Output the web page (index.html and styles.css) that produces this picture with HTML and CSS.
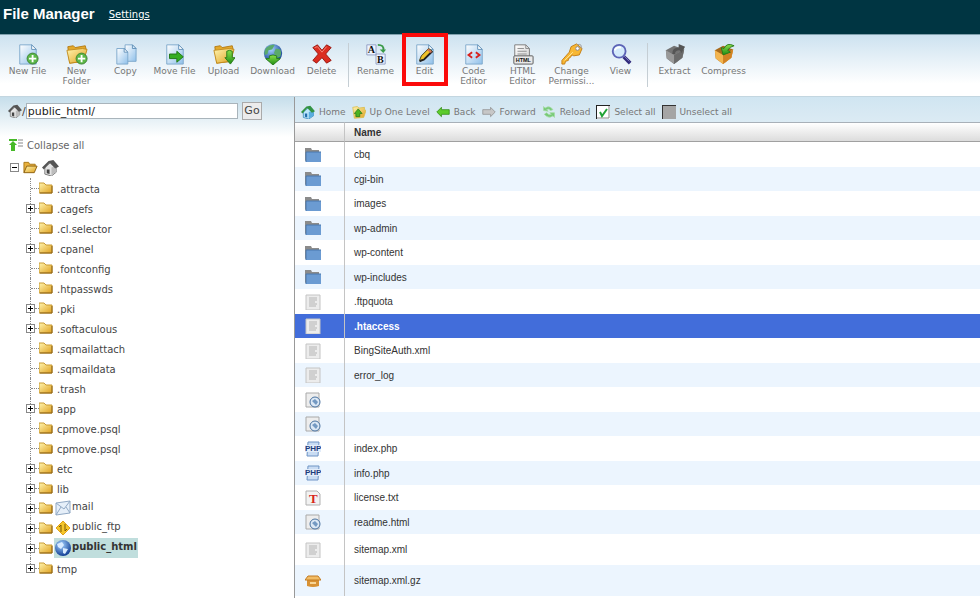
FILE: index.html
```html
<!DOCTYPE html>
<html lang="en">
<head>
    <meta charset="UTF-8">
    <title>File Manager</title>
    <link rel="stylesheet" href="styles.css">
</head>
<body>
    <!-- icon set -->
    <svg class="sprite" aria-hidden="true">
        <defs>
            <linearGradient id="gBlue" x1="0" y1="0" x2="1" y2="1"><stop offset="0" stop-color="#ffffff"/><stop offset="1" stop-color="#8fc0ea"/></linearGradient>
            <linearGradient id="gGold" x1="0" y1="0" x2="1" y2="1"><stop offset="0" stop-color="#fff5b0"/><stop offset="1" stop-color="#dfa01e"/></linearGradient>
            <linearGradient id="gGreen" x1="0" y1="0" x2="0" y2="1"><stop offset="0" stop-color="#8be04a"/><stop offset="1" stop-color="#1f8c14"/></linearGradient>
            <radialGradient id="gGlobe" cx=".4" cy=".3" r=".7"><stop offset="0" stop-color="#a6d4ff"/><stop offset="1" stop-color="#123f96"/></radialGradient>
            <linearGradient id="gGrey" x1="0" y1="0" x2="1" y2="1"><stop offset="0" stop-color="#ffffff"/><stop offset="1" stop-color="#cfcfcf"/></linearGradient>
        </defs>
        <symbol id="page" viewBox="0 0 24 24"><path d="M3 2h13l5 5v16H3z" fill="url(#gBlue)" stroke="#7ba6cb"/><path d="M16 2v5h5z" fill="#fff" stroke="#5f8fb8"/></symbol>
        <symbol id="bigfolder" viewBox="0 0 24 24"><path d="M2 4l6-1 2 2 11-2 1 4-2 13-16 2z" fill="#e3a92b" stroke="#b37a12"/><path d="M1 8l17-2 5 1-4 13-15 2z" fill="url(#gGold)" stroke="#c28a1b"/></symbol>
        <symbol id="plus" viewBox="0 0 24 24"><circle cx="17" cy="17" r="6" fill="#5cb848" stroke="#3b7f31"/><path d="M17 13v8M13 17h8" stroke="#fff" stroke-width="2"/></symbol>
        <symbol id="newfile" viewBox="0 0 24 24"><use href="#page"/><use href="#plus"/></symbol>
        <symbol id="newfolder" viewBox="0 0 24 24"><use href="#bigfolder"/><use href="#plus"/></symbol>
        <symbol id="copy" viewBox="0 0 24 24"><path d="M11 2h8l4 4v14H11z" fill="url(#gBlue)" stroke="#7ba6cb"/><path d="M19 2v4h4z" fill="#dcecf9" stroke="#5f8fb8"/><path d="M2 6h8l4 4v13H2z" fill="url(#gBlue)" stroke="#7ba6cb"/><path d="M10 6v4h4z" fill="#fff" stroke="#5f8fb8"/></symbol>
        <symbol id="move" viewBox="0 0 24 24"><use href="#page"/><path d="M6 12h8V9l7 6-7 6v-4H6z" fill="#35ad22" stroke="#1d7412"/></symbol>
        <symbol id="upload" viewBox="0 0 24 24"><use href="#bigfolder"/><path d="M15 9q3-2 6 0v7h3l-5 7-6-7h2z" fill="url(#gGreen)" stroke="#267a18"/></symbol>
        <symbol id="download" viewBox="0 0 24 24"><circle cx="12" cy="11" r="10" fill="url(#gGlobe)"/><path d="M5 5q4-4 9-3l-3 5-4 1-1 4-3 1q-1-5 2-8zM15 6l5 1q2 4 0 8l-3 1-4-5z" fill="#5aaa6b"/><path d="M8 14q4-2 8 0v3h4l-8 7-8-7h4z" fill="url(#gGreen)" stroke="#267a18"/></symbol>
        <symbol id="delete" viewBox="0 0 24 24"><path d="M2 5l5-3 5 6 5-6 5 3-6 7 6 7-5 3-5-6-6 6-4-3 6-7z" fill="#dc2d20" stroke="#96160e"/><path d="M4 5l3-1 5 6 5-6" fill="none" stroke="#f58a7c"/></symbol>
        <symbol id="rename" viewBox="0 0 24 24"><path d="M2 2h10v11H2zM12 12h10v11H12z" fill="#eef4ff" stroke="#8e9cc4"/><path d="M14 2q7 0 6 6" fill="none" stroke="#3a9a48" stroke-width="2"/><path d="M16 7h7l-3 4z" fill="#3a9a48"/></symbol>
        <symbol id="edit" viewBox="0 0 24 24"><use href="#page"/><path d="M6 19l2-5 8-8 4 3-9 9z" fill="#efc32c" stroke="#3e3615"/><path d="M6 20l5-2 9-9" fill="none" stroke="#222" stroke-width="2"/><path d="M15 7l4 3" stroke="#d8735a" stroke-width="2"/></symbol>
        <symbol id="code" viewBox="0 0 24 24"><use href="#page"/><path d="M10 10l-4 3 4 3M14 10l4 3-4 3" fill="none" stroke="#d9201c" stroke-width="2"/></symbol>
        <symbol id="html" viewBox="0 0 24 24"><path d="M3 2h12l4 4v15H3z" fill="url(#gGrey)" stroke="#777"/><path d="M15 2v4h4M6 6h7M6 9h10M6 12h10" fill="none" stroke="#8a8a8a"/><rect x="2" y="14" width="21" height="9" rx="1" fill="#e9e9e9" stroke="#555"/></symbol>
        <symbol id="key" viewBox="0 0 24 24"><path d="M11 4l6-3 6 5-3 7-6 1-2-1-2 3-2 1v2l-3 1-1 3H1v-4l8-9z" fill="#f7b733" stroke="#c27b12"/><path d="M4 19l9-9" stroke="#ffe9a0"/><circle cx="18" cy="6" r="2" fill="#fff" stroke="#889"/><path d="M18 2q5-2 4 4" fill="none" stroke="#999"/></symbol>
        <symbol id="view" viewBox="0 0 24 24"><path d="M15 15l7 7" stroke="#312b7c" stroke-width="4"/><path d="M15 14l6 6" stroke="#8580c6"/><circle cx="10" cy="9" r="7" fill="#d3eafb" stroke="#5c63b6" stroke-width="2"/><path d="M5 8q2-4 7-3" fill="none" stroke="#fff" stroke-width="2"/></symbol>
        <symbol id="extract" viewBox="0 0 24 24"><path d="M2 8l9-5 11 4-2 9-9 7-8-6z" fill="#747474"/><path d="M2 8l9 5 11-6-2 9-9 7-8-6z" fill="#999"/><path d="M11 13v10l9-7 2-9z" fill="#6a6a6a"/><path d="M9 12q0-7 7-7V1l7 3-4 7-2-3q-5 0-5 4z" fill="#555"/></symbol>
        <symbol id="compress" viewBox="0 0 24 24"><path d="M2 8l9-5 11 4-2 9-9 7-8-6z" fill="#a86a1b"/><path d="M2 8l9 5 11-6-2 9-9 7-8-6z" fill="#f3b54f"/><path d="M11 13v10l9-7 2-9z" fill="#d18224"/><path d="M23 3q-8-4-11 3L9 5l2 8 8-3-3-2q2-4 7-5z" fill="url(#gGreen)" stroke="#267a18"/></symbol>

        <symbol id="homegrey" viewBox="0 0 18 18"><path d="M3 9v7l7 2 5-4V8l-5-5z" fill="#e4e4e4" stroke="#777"/><path d="M10 9v8l5-3V7z" fill="#bcbcbc"/><path d="M7 2l5-1 6 7-4 2-6-6-6 7-2-2z" fill="#555"/><path d="M5 11h3v5l-3-1z" fill="#444"/></symbol>
        <symbol id="home" viewBox="0 0 18 18"><path d="M3 9v7l7 2 6-4V8l-6-5z" fill="#bde6fb" stroke="#3586bb"/><path d="M10 9v8l6-3V7z" fill="#5aaedf"/><path d="M7 2l5-1 6 7-4 2-6-6-6 7-2-2z" fill="#339343"/><path d="M5 11h3v5l-3-1z" fill="#226daa"/></symbol>
        <symbol id="up" viewBox="0 0 18 18"><path d="M1 3l6-1 2 2 7-1v3l2 1-3 9-12 1z" fill="url(#gGold)" stroke="#d8bb4a"/><path d="M5 15v-4H3l5-6 5 6h-3v4z" fill="#4ab421" stroke="#267a18"/></symbol>
        <symbol id="back" viewBox="0 0 18 18"><path d="M1 9l6-6v3h10v6H7v3z" fill="#5dcc2c" stroke="#328d15"/></symbol>
        <symbol id="forward" viewBox="0 0 18 18"><path d="M17 9l-6-6v3H1v6h10v3z" fill="#c7c7c7" stroke="#929292"/></symbol>
        <symbol id="reload" viewBox="0 0 18 18"><path d="M2 7V2l2 2q6-4 10 2l-3 1q-3-3-5-1l2 2zM16 10v6l-2-2q-6 4-11-2l3-2q3 4 6 2l-2-2z" fill="#78ca78" stroke="#a2dba2"/></symbol>
        <symbol id="checkon" viewBox="0 0 14 14"><rect width="14" height="14" fill="#fff"/><path d="M0 14V0h14v1H1v13z" fill="#222"/><path d="M1 13h12V1" fill="none" stroke="#888"/><path d="M4 7l2 4 5-7" fill="none" stroke="#21a336" stroke-width="2"/></symbol>
        <symbol id="checkoff" viewBox="0 0 14 14"><rect width="14" height="14" fill="#a5a5a5"/><path d="M0 14V0h14v1H1v13z" fill="#333"/></symbol>
        <symbol id="collapse" viewBox="0 0 14 12"><path d="M0 0h8v2H0zM4 2l4 4H6v6H2V6H0z" fill="#46b928"/><path d="M9 1h5M9 4h5M9 7h5" stroke="#888"/></symbol>

        <symbol id="closed" viewBox="0 0 14 12"><path d="M0 1h5l2 2h6v8H0z" fill="url(#gGold)" stroke="#c99b35"/><path d="M1 11h12V4" fill="none" stroke="#8a6114"/></symbol>
        <symbol id="open" viewBox="0 0 16 13"><path d="M1 12V1h5l1 2h6v3" fill="#e9b13c" stroke="#a77716"/><path d="M1 12l3-7h11l-3 7z" fill="url(#gGold)" stroke="#8c5f10"/></symbol>
        <symbol id="expand" viewBox="0 0 7 7"><path d="M1 3h5v1H1zM3 1h1v5H3z"/></symbol>
        <symbol id="shrink" viewBox="0 0 7 7"><path d="M1 3h5v1H1z"/></symbol>
        <symbol id="mail" viewBox="0 0 16 16"><path d="M1 3l14-2v12L1 15z" fill="#e6eff9" stroke="#91a9c5"/><path d="M1 3l8 6 6-8M1 15l5-8M15 13l-4-6" fill="none" stroke="#91a9c5"/></symbol>
        <symbol id="ftp" viewBox="0 0 16 16"><path d="M8 1l7 7-7 7-7-7z" fill="#f5c62c" stroke="#e0a21b"/><path d="M6 12V5M4 7l2-2M10 4v7M12 9l-2 2" fill="none" stroke="#7d5b06"/></symbol>
        <symbol id="globe" viewBox="0 0 16 16"><circle cx="8" cy="8" r="8" fill="url(#gGlobe)"/><path d="M2 4l5-2 2 3-3 4-3-2zM8 8l5 1-3 5-2-1z" fill="#d9ebff"/></symbol>

        <symbol id="folder" viewBox="0 0 16 16"><path d="M0 14V1h6l1 2h7v4" fill="#8b8b8b"/><path d="M2 5h14v10H1V6z" fill="#6b9bd2"/><path d="M1 15V5h15" fill="none" stroke="#4a78ad"/></symbol>
        <symbol id="doc" viewBox="0 0 16 16"><path d="M1 1h14v15H1z" fill="#ececec" stroke="#c4c4c4"/><path d="M4 4h8M4 6h8M4 8h6M4 10h8M4 12h7" stroke="#b4b4b4"/></symbol>
        <symbol id="web" viewBox="0 0 16 16"><path d="M1 1h13v14H1z" fill="#ededed" stroke="#a9a9a9"/><circle cx="10" cy="10" r="5" fill="#dce8f5" stroke="#48719f"/><path d="M7 9l3-2 3 3-2 3-2-2z" fill="#7499c2"/></symbol>
        <symbol id="php" viewBox="0 0 16 16"><path d="M3 1h11l-1 14H2z" fill="#c9dcf3" stroke="#6e94c5"/><path d="M0 4h16v7H0z" fill="#e3edfa"/></symbol>
        <symbol id="txt" viewBox="0 0 16 16"><path d="M1 1h11l3 3v11H1z" fill="#f2f2f2" stroke="#b1b1b1"/></symbol>
        <symbol id="gz" viewBox="0 0 16 16"><path d="M2 7h12v6q-6 2-12 0z" fill="#d89235"/><path d="M3 3h10l3 4H0z" fill="#f2bd66" stroke="#c27a22"/><path d="M5 9h6v2H5z" fill="#f8d596"/></symbol>
    </svg>

    <header class="title-bar">
        <h1>File Manager</h1>
        <a href="#settings">Settings</a>
    </header>

    <nav class="toolbar">
        <button type="button"><svg><use href="#newfile"/></svg>New File</button>
        <button type="button"><svg><use href="#newfolder"/></svg>New<br>Folder</button>
        <button type="button"><svg><use href="#copy"/></svg>Copy</button>
        <button type="button"><svg><use href="#move"/></svg>Move File</button>
        <button type="button"><svg><use href="#upload"/></svg>Upload</button>
        <button type="button"><svg><use href="#download"/></svg>Download</button>
        <button type="button"><svg><use href="#delete"/></svg>Delete</button>
        <span class="separator"></span>
        <button type="button"><svg viewBox="0 0 24 24"><use href="#rename"/><text x="3" y="11" class="glyph serif">A</text><text x="13" y="22" class="glyph serif">B</text></svg>Rename</button>
        <button type="button" class="highlight"><svg><use href="#edit"/></svg>Edit</button>
        <button type="button"><svg><use href="#code"/></svg>Code<br>Editor</button>
        <button type="button"><svg viewBox="0 0 24 24"><use href="#html"/><text x="4" y="21" class="glyph tiny">HTML</text></svg>HTML<br>Editor</button>
        <button type="button"><svg><use href="#key"/></svg>Change<br>Permissi...</button>
        <button type="button"><svg><use href="#view"/></svg>View</button>
        <span class="separator"></span>
        <button type="button"><svg><use href="#extract"/></svg>Extract</button>
        <button type="button"><svg><use href="#compress"/></svg>Compress</button>
    </nav>

    <main class="panes">
        <aside class="tree-pane">
            <form class="location">
                <label for="path"><svg><use href="#homegrey"/></svg>/</label>
                <input id="path" type="text" value="public_html/">
                <button type="button">Go</button>
            </form>
            <a href="#collapse" class="collapse-all"><svg><use href="#collapse"/></svg>Collapse all</a>
            <div class="root">
                <button type="button" class="toggle" aria-label="Collapse home"><svg><use href="#shrink"/></svg></button>
                <svg class="open"><use href="#open"/></svg>
                <svg class="house"><use href="#homegrey"/></svg>
            </div>
            <ul class="tree">
                <li><i class="branch"></i><svg><use href="#closed"/></svg><a href="#t">.attracta</a></li>
                <li><button type="button" class="toggle" aria-label="Expand"><svg><use href="#expand"/></svg></button><i class="branch"></i><svg><use href="#closed"/></svg><a href="#t">.cagefs</a></li>
                <li><i class="branch"></i><svg><use href="#closed"/></svg><a href="#t">.cl.selector</a></li>
                <li><button type="button" class="toggle" aria-label="Expand"><svg><use href="#expand"/></svg></button><i class="branch"></i><svg><use href="#closed"/></svg><a href="#t">.cpanel</a></li>
                <li><i class="branch"></i><svg><use href="#closed"/></svg><a href="#t">.fontconfig</a></li>
                <li><i class="branch"></i><svg><use href="#closed"/></svg><a href="#t">.htpasswds</a></li>
                <li><button type="button" class="toggle" aria-label="Expand"><svg><use href="#expand"/></svg></button><i class="branch"></i><svg><use href="#closed"/></svg><a href="#t">.pki</a></li>
                <li><button type="button" class="toggle" aria-label="Expand"><svg><use href="#expand"/></svg></button><i class="branch"></i><svg><use href="#closed"/></svg><a href="#t">.softaculous</a></li>
                <li><i class="branch"></i><svg><use href="#closed"/></svg><a href="#t">.sqmailattach</a></li>
                <li><i class="branch"></i><svg><use href="#closed"/></svg><a href="#t">.sqmaildata</a></li>
                <li><i class="branch"></i><svg><use href="#closed"/></svg><a href="#t">.trash</a></li>
                <li><button type="button" class="toggle" aria-label="Expand"><svg><use href="#expand"/></svg></button><i class="branch"></i><svg><use href="#closed"/></svg><a href="#t">app</a></li>
                <li><i class="branch"></i><svg><use href="#closed"/></svg><a href="#t">cpmove.psql</a></li>
                <li><i class="branch"></i><svg><use href="#closed"/></svg><a href="#t">cpmove.psql</a></li>
                <li><button type="button" class="toggle" aria-label="Expand"><svg><use href="#expand"/></svg></button><i class="branch"></i><svg><use href="#closed"/></svg><a href="#t">etc</a></li>
                <li><button type="button" class="toggle" aria-label="Expand"><svg><use href="#expand"/></svg></button><i class="branch"></i><svg><use href="#closed"/></svg><a href="#t">lib</a></li>
                <li><button type="button" class="toggle" aria-label="Expand"><svg><use href="#expand"/></svg></button><i class="branch"></i><svg><use href="#closed"/></svg><a href="#t" class="special"><svg><use href="#mail"/></svg>mail</a></li>
                <li><button type="button" class="toggle" aria-label="Expand"><svg><use href="#expand"/></svg></button><i class="branch"></i><svg><use href="#closed"/></svg><a href="#t" class="special"><svg><use href="#ftp"/></svg>public_ftp</a></li>
                <li><button type="button" class="toggle" aria-label="Expand"><svg><use href="#expand"/></svg></button><i class="branch"></i><svg><use href="#closed"/></svg><a href="#t" class="special current"><svg><use href="#globe"/></svg>public_html</a></li>
                <li><button type="button" class="toggle" aria-label="Expand"><svg><use href="#expand"/></svg></button><i class="branch"></i><svg><use href="#closed"/></svg><a href="#t">tmp</a></li>
            </ul>
        </aside>

        <section class="file-pane">
            <nav class="actions">
                <a href="#home"><svg><use href="#home"/></svg>Home</a>
                <a href="#up"><svg><use href="#up"/></svg>Up One Level</a>
                <a href="#back"><svg><use href="#back"/></svg>Back</a>
                <a href="#forward"><svg><use href="#forward"/></svg>Forward</a>
                <a href="#reload"><svg><use href="#reload"/></svg>Reload</a>
                <a href="#all"><svg><use href="#checkon"/></svg>Select all</a>
                <a href="#none"><svg><use href="#checkoff"/></svg>Unselect all</a>
            </nav>
            <table class="files">
                <thead>
                    <tr><th class="type"></th><th>Name</th></tr>
                </thead>
                <tbody>
                    <tr><td><svg><use href="#folder"/></svg></td><td>cbq</td></tr>
                    <tr><td><svg><use href="#folder"/></svg></td><td>cgi-bin</td></tr>
                    <tr><td><svg><use href="#folder"/></svg></td><td>images</td></tr>
                    <tr><td><svg><use href="#folder"/></svg></td><td>wp-admin</td></tr>
                    <tr><td><svg><use href="#folder"/></svg></td><td>wp-content</td></tr>
                    <tr><td><svg><use href="#folder"/></svg></td><td>wp-includes</td></tr>
                    <tr><td><svg><use href="#doc"/></svg></td><td>.ftpquota</td></tr>
                    <tr class="selected"><td><svg><use href="#doc"/></svg></td><td>.htaccess</td></tr>
                    <tr><td><svg><use href="#doc"/></svg></td><td>BingSiteAuth.xml</td></tr>
                    <tr><td><svg><use href="#doc"/></svg></td><td>error_log</td></tr>
                    <tr><td><svg><use href="#web"/></svg></td><td></td></tr>
                    <tr><td><svg><use href="#web"/></svg></td><td></td></tr>
                    <tr><td><svg viewBox="0 0 16 16"><use href="#php"/><text x="0" y="10" class="glyph php">PHP</text></svg></td><td>index.php</td></tr>
                    <tr><td><svg viewBox="0 0 16 16"><use href="#php"/><text x="0" y="10" class="glyph php">PHP</text></svg></td><td>info.php</td></tr>
                    <tr><td><svg viewBox="0 0 16 16"><use href="#txt"/><text x="4" y="13" class="glyph tee">T</text></svg></td><td>license.txt</td></tr>
                    <tr><td><svg><use href="#web"/></svg></td><td>readme.html</td></tr>
                    <tr class="tall"><td><svg><use href="#doc"/></svg></td><td>sitemap.xml</td></tr>
                    <tr class="tall"><td><svg><use href="#gz"/></svg></td><td>sitemap.xml.gz</td></tr>
                </tbody>
            </table>
        </section>
    </main>
</body>
</html>
```

FILE: styles.css
```css
*,
*::after {
    box-sizing: border-box;
}
body {
    display: flex;
    flex-direction: column;
    min-height: 100vh;
    margin: 0;
    font-family: "DejaVu Sans", Verdana, sans-serif;
    font-size: 10px;
    color: #444;
    background: #fff;
}
svg {
    display: block;
    flex: none;
}
a {
    color: inherit;
    text-decoration: none;
}
button {
    font-family: inherit;
    color: inherit;
}
.sprite {
    position: absolute;
    width: 0;
    height: 0;
}

/* lettering inside the icons */
.glyph {
    font-family: "Liberation Sans", Arial, sans-serif;
    font-weight: bold;
    fill: #111;
}
.serif {
    font-family: "Liberation Serif", serif;
    font-size: 11px;
}
.tiny {
    font-size: 6px;
}
.php {
    font-size: 8px;
    fill: #1d3d7c;
}
.tee {
    font-family: "Liberation Serif", serif;
    font-size: 13px;
    fill: #d8271c;
}

/* title */
.title-bar {
    display: flex;
    align-items: center;
    gap: 14px;
    height: 34px;
    padding: 0 3px 8px;
    color: #fff;
    background: #003542;
}
.title-bar h1 {
    margin: 0;
    font-family: "Liberation Sans", Arial, sans-serif;
    font-size: 15px;
}
.title-bar a {
    padding-top: 2px;
    text-decoration: underline;
}

/* toolbar */
.toolbar {
    display: flex;
    height: 63px;
    padding: 8px 3px 0;
    border-top: 1px solid #7fa0ad;
    border-bottom: 1px solid #c3d6e0;
    background: linear-gradient(#cde2f0, #fff 80%);
}
.toolbar button {
    position: relative;
    display: flex;
    flex-direction: column;
    align-items: center;
    width: 49px;
    height: 44px;
    padding: 0;
    border: 0;
    background: none;
    font-size: 9px;
    line-height: 10px;
    color: #777;
    white-space: nowrap;
}
.toolbar svg {
    width: 22px;
    height: 22px;
    margin-bottom: 1px;
}
.separator {
    width: 1px;
    height: 44px;
    margin: 0 2px;
    background: #c5ced4;
}
.highlight::after {
    content: "";
    position: absolute;
    top: -10px;
    left: 2px;
    width: 46px;
    height: 53px;
    border: 4px solid #fb0a0a;
}

/* panes */
.panes {
    display: grid;
    grid-template-columns: 30% 1fr;
    flex: 1;
}
.tree-pane {
    background: linear-gradient(#c6deeb, #fff 40px);
}
.file-pane {
    border-left: 1px solid #999;
    background: linear-gradient(#d0e5f1, #dcebf4 26px, #fff 26px);
}

/* path box */
.location {
    display: flex;
    align-items: center;
    gap: 4px;
    height: 28px;
    padding: 0 32px 0 8px;
}
.location label {
    display: flex;
    align-items: center;
    margin-right: -4px;
    font-size: 11px;
}
.location svg {
    width: 14px;
    height: 14px;
}
.location input {
    flex: 1;
    min-width: 0;
    height: 16px;
    padding: 0 1px;
    border: 1px solid #a9b4bb;
    font-family: inherit;
    font-size: 11px;
    color: #222;
}
.location button {
    width: 20px;
    height: 18px;
    padding: 0;
    border: 1px solid #aaa;
    background: #ececec;
    font-size: 11px;
    line-height: 14px;
}

/* folder tree */
.collapse-all {
    display: flex;
    align-items: center;
    gap: 4px;
    height: 20px;
    margin-top: 10px;
    padding-left: 9px;
    color: #666;
}
.collapse-all svg {
    width: 14px;
    height: 12px;
}
.root {
    display: flex;
    align-items: center;
    gap: 4px;
    height: 22px;
    padding: 0 10px;
    margin-top: 1px;
}
.root .open {
    width: 15px;
    height: 13px;
}
.root .house {
    width: 17px;
    height: 17px;
}
.toggle {
    position: relative;
    flex: none;
    width: 9px;
    height: 9px;
    padding: 0;
    border: 1px solid #888;
    background: #fff;
}
.toggle svg {
    width: 7px;
    height: 7px;
}
.tree {
    margin: 0;
    padding: 0 0 0 26px;
    list-style: none;
}
.tree li {
    position: relative;
    display: flex;
    align-items: center;
    height: 20px;
}
.tree li::before {
    content: "";
    position: absolute;
    top: 0;
    bottom: 0;
    left: 4px;
    border-left: 1px dotted #888;
}
.tree li:last-child::before {
    bottom: 10px;
}
.branch {
    width: 4px;
    border-top: 1px dotted #888;
}
.branch:first-child {
    width: 8px;
    margin-left: 5px;
}
.tree li > svg {
    width: 14px;
    height: 12px;
}
.tree li > a {
    padding: 2px 0 0 4px;
}
.tree li > .special {
    display: flex;
    height: 20px;
    margin-left: 1px;
    padding: 2px 1px;
    line-height: 14px;
}
.special svg {
    width: 16px;
    height: 16px;
    margin-right: 1px;
}
.current {
    font-weight: bold;
    color: #333;
    background: #c0dedd;
}

/* file list */
.actions {
    display: flex;
    gap: 6px;
    height: 25px;
    padding: 4px 6px 0;
    font-size: 9px;
    color: #777;
}
.actions a {
    display: flex;
    align-items: center;
    gap: 4px;
    white-space: nowrap;
}
.actions svg {
    width: 14px;
    height: 14px;
}
.files {
    width: 100%;
    border-collapse: separate;
    border-spacing: 0;
    table-layout: fixed;
    font-family: "Liberation Sans", Arial, sans-serif;
    color: #333;
}
.files th,
.files td {
    height: 25px;
    padding: 0 9px;
    text-align: left;
}
.files th {
    height: 20px;
    border-top: 1px solid #a8b0b8;
    border-bottom: 1px solid #a0a0a0;
    background: linear-gradient(#fff, #dcdcdc);
}
.files .type {
    width: 50px;
}
.files th:first-child,
.files td:first-child {
    padding-left: 10px;
    border-right: 1px solid #c4c4c4;
}
.files td svg {
    width: 16px;
    height: 16px;
}
.files tr:nth-child(even) td {
    height: 24px;
    background: #ecf5fe;
}
.files .tall td,
.files .tall:nth-child(even) td {
    height: 31px;
}
.files .selected:nth-child(even) td {
    font-weight: bold;
    color: #fff;
    background: #426dda;
}
```
